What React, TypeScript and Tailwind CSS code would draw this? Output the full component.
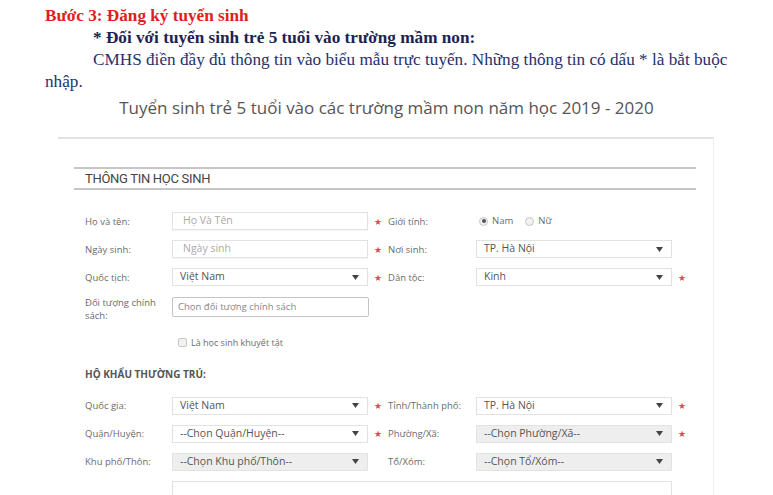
import React from 'react'

function Star({ hidden }: { hidden?: boolean }) {
  return (
    <span className={`flex w-[20px] justify-center text-[9px] leading-none text-[#e8474c] ${hidden ? 'invisible' : ''}`}>
      ★
    </span>
  )
}

function Arrow() {
  return (
    <svg width="7" height="5" viewBox="0 0 7 5" className="shrink-0">
      <path d="M0 0h7L3.5 5z" fill="#444" />
    </svg>
  )
}

function TextInput({ placeholder }: { placeholder: string }) {
  return (
    <div className="flex h-[18px] w-[196px] items-center border border-[#e2e2e2] bg-white pl-[10px] text-[10.5px] text-[#aaa] shadow-[0_1px_1px_rgba(0,0,0,0.04)]">
      {placeholder}
    </div>
  )
}

function Select({ value, disabled }: { value: string; disabled?: boolean }) {
  return (
    <div
      className={`flex h-[18px] w-[196px] items-center justify-between border border-[#e2e2e2] pl-[7px] pr-[8px] text-[10.5px] text-[#555] ${
        disabled ? 'bg-[#eeeeee]' : 'bg-white'
      }`}
    >
      <span>{value}</span>
      <Arrow />
    </div>
  )
}

function Label({ children, wide }: { children: React.ReactNode; wide?: boolean }) {
  return <div className={`${wide ? 'w-[88px]' : 'w-[87px]'} shrink-0 text-[9.5px] leading-[13px] text-[#6b6b6b]`}>{children}</div>
}

function Radio({ checked }: { checked?: boolean }) {
  return (
    <span className="flex h-[9px] w-[9px] items-center justify-center rounded-full border border-[#c6c6c6] bg-[#f2f2f2]">
      {checked && <span className="h-[4px] w-[4px] rounded-full bg-[#555]" />}
    </span>
  )
}

export default function App() {
  return (
    <div className="h-[495px] w-[773px] overflow-hidden bg-white">
      {/* Doc text */}
      <div className="pl-[45px] pt-[5px] font-['Liberation_Serif',serif] text-[17.2px] leading-[22px]">
        <p className="font-bold text-[#e01e1e]">Bước 3: Đăng ký tuyển sinh</p>
        <p className="pl-[48px] font-bold text-[#1b2352]">* Đối với tuyển sinh trẻ 5 tuổi vào trường mầm non:</p>
        <p className="w-[695px] indent-[48px] text-[#26306c]">
          CMHS điền đầy đủ thông tin vào biểu mẫu trực tuyến. Những thông tin có dấu * là bắt buộc nhập.
        </p>
      </div>

      <h1 className="mt-[3px] text-center font-['Open_Sans',sans-serif] text-[17px] leading-[24px] text-[#555]">
        Tuyển sinh trẻ 5 tuổi vào các trường mầm non năm học 2019 - 2020
      </h1>

      {/* Form panel */}
      <div className="ml-[58px] mt-[17px] h-[400px] w-[656px] border-r border-t-2 border-r-[#efefef] border-t-[#e2e2e2] pl-[16px] pr-[17px] pt-[28px] font-['Open_Sans',sans-serif]">
        <div className="border-y-2 border-[#c6c6c6] pl-[11px] font-['Roboto',sans-serif] text-[13px] leading-[19px] tracking-[-0.3px] text-[#444]">
          THÔNG TIN HỌC SINH
        </div>

        <div className="mt-[22px] pl-[11px]">
          <div className="flex flex-col gap-[10px]">
            <div className="flex h-[18px] items-center">
              <Label>Họ và tên:</Label>
              <TextInput placeholder="Họ Và Tên" />
              <Star />
              <Label wide>Giới tính:</Label>
              <div className="flex items-center pl-[3px] text-[9.5px] text-[#6b6b6b]">
                <Radio checked />
                <span className="ml-[4px]">Nam</span>
                <span className="ml-[12px]" />
                <Radio />
                <span className="ml-[4px]">Nữ</span>
              </div>
            </div>

            <div className="flex h-[18px] items-center">
              <Label>Ngày sinh:</Label>
              <TextInput placeholder="Ngày sinh" />
              <Star />
              <Label wide>Nơi sinh:</Label>
              <Select value="TP. Hà Nội" />
            </div>

            <div className="flex h-[18px] items-center">
              <Label>Quốc tịch:</Label>
              <Select value="Việt Nam" />
              <Star />
              <Label wide>Dân tộc:</Label>
              <Select value="Kinh" />
              <Star />
            </div>

            <div className="flex items-start">
              <Label>
                Đối tượng chính
                <br />
                sách:
              </Label>
              <div className="mt-[1px] flex h-[20px] w-[197px] items-center rounded-[2px] border border-[#c4c4c4] bg-white pl-[5px] text-[9.5px] text-[#888]">
                Chọn đối tượng chính sách
              </div>
            </div>
          </div>

          <div className="mt-[14px] flex items-center pl-[93px] text-[9px] text-[#6b6b6b]">
            <span className="h-[9px] w-[9px] rounded-[2px] border border-[#c6c6c6] bg-[#f2f2f2]" />
            <span className="ml-[4px]">Là học sinh khuyết tật</span>
          </div>

          <div className="mt-[18px] text-[10px] font-bold leading-[13px] text-[#555]">HỘ KHẨU THƯỜNG TRÚ:</div>

          <div className="mt-[16px] flex flex-col gap-[10px]">
            <div className="flex h-[18px] items-center">
              <Label>Quốc gia:</Label>
              <Select value="Việt Nam" />
              <Star />
              <Label wide>Tỉnh/Thành phố:</Label>
              <Select value="TP. Hà Nội" />
              <Star />
            </div>

            <div className="flex h-[18px] items-center">
              <Label>Quận/Huyện:</Label>
              <Select value="--Chọn Quận/Huyện--" />
              <Star />
              <Label wide>Phường/Xã:</Label>
              <Select value="--Chọn Phường/Xã--" disabled />
              <Star />
            </div>

            <div className="flex h-[18px] items-center">
              <Label>Khu phố/Thôn:</Label>
              <Select value="--Chọn Khu phố/Thôn--" disabled />
              <Star hidden />
              <Label wide>Tổ/Xóm:</Label>
              <Select value="--Chọn Tổ/Xóm--" disabled />
            </div>

            <div className="flex h-[18px] items-center">
              <div className="w-[87px] shrink-0" />
              <div className="h-[18px] w-[500px] border border-[#e2e2e2] bg-white" />
            </div>
          </div>
        </div>
      </div>
    </div>
  )
}
